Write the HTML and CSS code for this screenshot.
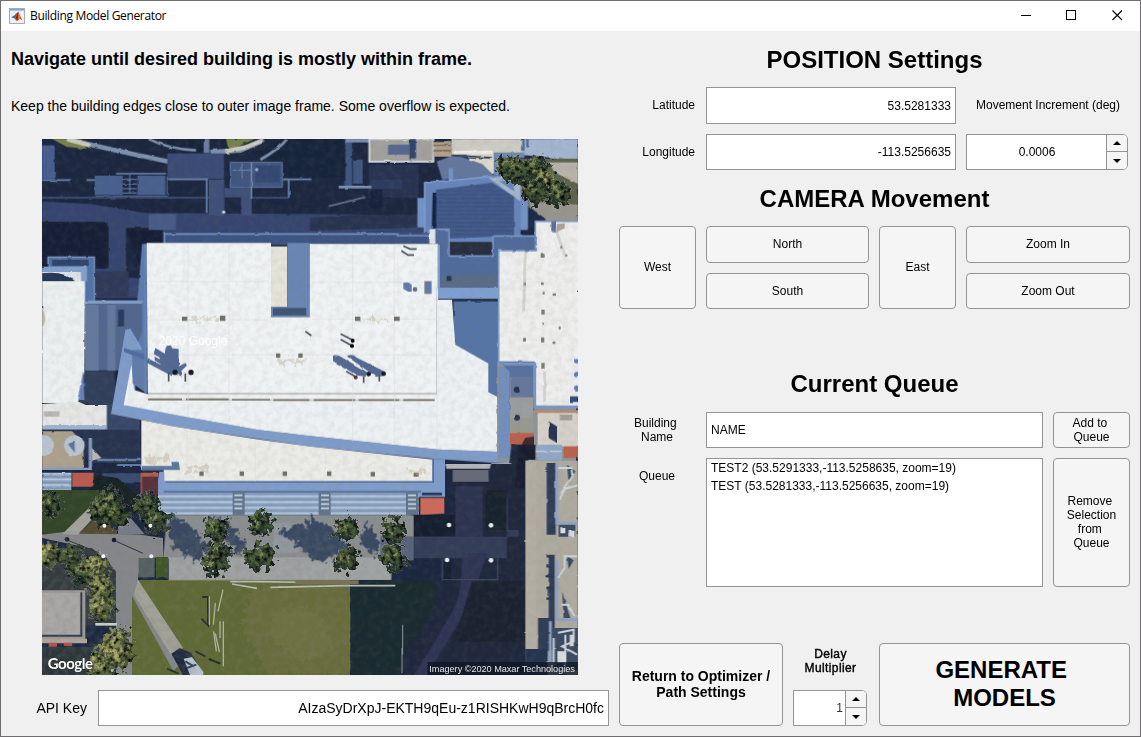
FILE: index.html
```html
<!DOCTYPE html>
<html lang="en">
<head>
<meta charset="utf-8">
<title>Building Model Generator</title>
<link rel="stylesheet" href="styles.css">
</head>
<body>
<div class="window">
  <header class="titlebar">
    <svg class="app-icon" viewBox="0 0 16 16">
      <rect x=".5" y=".5" width="15" height="15" fill="#eef0f3" stroke="#a3adb6"/>
      <rect x="1" y="1" width="14" height="1.6" fill="#7ea9cf"/>
      <path d="M2 9.200l3.200-1.700L8.200 4.500l.8 1.200-2.200 4.800-1.500-.3z" fill="#34709f"/>
      <path d="M5.200 10.400L9.200 3.600l1.700 3.600 2.600 5.300-2.700-1.700-2.800 2.500z" fill="#d9541e"/>
      <path d="M6.800 10l2.300-6.200.6 4.200-1.500 4.400z" fill="#7a2619"/>
      <path d="M9.300 5l1.600 4-1.300 2.600z" fill="#f3a133"/>
    </svg>
    <span class="title">Building Model Generator</span>
    <svg class="controls" viewBox="0 0 120 30" shape-rendering="crispEdges">
      <path d="M11 14.5h10M56.500 9.500h9v9h-9z" fill="none" stroke="#000"/>
      <path d="M102.500 9.500l9.500 9.500M112 9.500L102.500 19" stroke="#000" stroke-width="1.100" shape-rendering="auto"/>
    </svg>
  </header>
  <main class="content">
    <section class="left">
      <h2 class="instruction"><span>Navigate until desired building is mostly within frame.</span></h2>
      <p class="hint"><span>Keep the building edges close to outer image frame. Some overflow is expected.</span></p>
      <svg class="map" viewBox="0 3 1608 1608" color-interpolation-filters="sRGB">
        <defs>
          <filter id="rough" x="-20%" y="-20%" width="140%" height="140%"><feTurbulence type="fractalNoise" baseFrequency=".06" numOctaves="3" seed="4" result="n"/><feDisplacementMap in="SourceGraphic" in2="n" scale="50" xChannelSelector="R" yChannelSelector="G"/></filter>
          <filter id="leaves" x="-30%" y="-30%" width="160%" height="160%"><feTurbulence type="fractalNoise" baseFrequency=".055" numOctaves="3" seed="7" result="n"/><feDisplacementMap in="SourceGraphic" in2="n" scale="60" xChannelSelector="R" yChannelSelector="G" result="d"/><feTurbulence type="fractalNoise" baseFrequency=".07" numOctaves="3" seed="12"/><feColorMatrix values="2.400 0 0 0 -.4  2.400 0 0 0 -.4  2.400 0 0 0 -.35  0 0 0 0 1" result="m"/><feBlend in="d" in2="m" mode="multiply"/><feComposite in2="d" operator="in"/></filter>
          <filter id="edge" x="-5%" y="-5%" width="110%" height="110%"><feTurbulence type="fractalNoise" baseFrequency=".04" numOctaves="2" seed="9" result="n"/><feDisplacementMap in="SourceGraphic" in2="n" scale="7" xChannelSelector="R" yChannelSelector="G"/></filter>
          <filter id="grain" x="0" y="0" width="100%" height="100%"><feTurbulence type="fractalNoise" baseFrequency=".05" numOctaves="4" seed="2"/><feColorMatrix values="0 0 0 0 .5  0 0 0 0 .5  0 0 0 0 .45  2.400 0 0 0 -.9"/></filter>
          <pattern id="slats" width="20" height="17" patternUnits="userSpaceOnUse"><path d="M0 0h20v17H0z" fill="#8ea5c3"/><path d="M0 4h20" stroke="#bccfe2" stroke-width="5"/><path d="M0 14h20" stroke="#687f9f" stroke-width="2"/></pattern>
          <pattern id="deck" width="20" height="12" patternUnits="userSpaceOnUse"><path d="M0 0h20v12H0z" fill="#42598b"/><path d="M0 2h20" stroke="#3a4f7f" stroke-width="3"/></pattern>
          <g id="tree"><circle r="38" fill="#2b3b2c"/><circle cx="-10" cy="-9" r="27" fill="#4d6039"/><circle cx="12" cy="7" r="18" fill="#425536"/><circle cx="-9" cy="-11" r="11" fill="#7d8a56"/></g>
          <g id="olive"><circle r="40" fill="#55633a"/><circle cx="-9" cy="-8" r="31" fill="#828b50"/><circle cx="15" cy="13" r="17" fill="#4f5c35"/><circle cx="-9" cy="-12" r="13" fill="#a8ab68"/></g>
        </defs>
        <rect width="1608" height="1620" fill="#1c2740"/>
        <g filter="url(#edge)">
        <!-- north grounds -->
        <path d="M0 190L145 198 310 225 804 228 1150 232v58H330l-78-18v148h62v60H160v-90h40V265L0 250z" fill="#36456f"/>
        <path d="M0 40h120l240 35-60 45H150v70H0z" fill="#1c2740"/>
        <path d="M320 0h170v42l-90-6zM640 45l80-42h190v115H720V75z" fill="#17253b"/>
        <path d="M30 3h75l30 30-60-6zM552 3h88l-80 34z" fill="#77824b"/>
        <path d="M75 3q110 28 315 70M505 42l90-5 70-30" fill="none" stroke="#7d90ad" stroke-width="14"/><path d="M75 3q30 8 70 20M550 40l60-12 50-20" fill="none" stroke="#c9ccbb" stroke-width="13"/>
        <path d="M320 3q60 30 142 34M655 65q60-35 80-62" fill="none" stroke="#7d90ad" stroke-width="8"/>
        <path d="M485 3h17v42h-17z" fill="#6a7ea6"/>
        <path d="M376 46h170v76H376z" fill="#3a4b76"/>
        <path d="M0 22h38v100H0z" fill="#465d90"/>
        <path d="M158 113h84v58h-84zM286 113h84v58h-84z" fill="#48608f"/>
        <path d="M222 107h150M0 126h86M134 126h24M378 124h120M720 124h88M740 125v54M494 125v100" stroke="#6d86b3" stroke-width="5"/>
        <path d="M158 174h220M0 179h500M630 179h110M375 115v55" stroke="#576f9e" stroke-width="3"/>
        <path d="M242 124h42M242 138h42M242 152h42M242 165h42M263 110v56" stroke="#6d86b3" stroke-width="3"/>
        <path d="M500 124h47v110h-47zM548 150h82v28h-82zM597 178h32v55h-32z" fill="#3f5079"/>
        <path d="M565 73h156v75H565z" fill="#40567f" stroke="#5f79a9" stroke-width="3"/>
        <path d="M640 83h74v50h-74z" fill="#334872"/><path d="M628 73v110" stroke="#7c92bb" stroke-width="4"/><path d="M572 97h55M600 76v45" stroke="#7087b1" stroke-width="3"/><circle cx="644" cy="95" r="5" fill="#a3b5d2"/><circle cx="545" cy="222" r="5" fill="#cdd6e3"/>
        <path d="M0 252h196v140H160v80h-10V392H0zM252 270h110v160h-50z" fill="#161f36"/>
        <path d="M200 400h60v76H160v-76z" fill="#2f3a58"/>
        <path d="M320 228h82v48h-82z" fill="#475b87"/>
        <!-- northeast grounds -->
        <path d="M804 240q200-15 340-10v38l-340 10z" fill="#28334f"/><path d="M860 205l110-28" stroke="#62718f" stroke-width="5"/>
        <path d="M980 80h150v100H980z" fill="#273350"/><path d="M985 125h95v28h-95z" fill="#2d3b60"/><path d="M985 155h36v58h-36z" fill="#18223a"/>
        <path d="M910 3h20v140h-20zM933 65h29v72h-29z" fill="#40557f"/>
        <path d="M910 3h104v10H910zM890 143h98v8h-98z" fill="#7c92b5"/>
        <path d="M982 3h192v68H982z" fill="#a3a19d" stroke="#ced6dd" stroke-width="6"/>
        <path d="M1038 20h64v30h-64z" fill="#55688f"/><path d="M1102 3h20v58h-20z" fill="#32436b"/>
        <path d="M1174 12h54v44h-54z" fill="#b3a188"/><path d="M1174 22h54M1174 38h54" stroke="#716a61" stroke-width="4"/>
        <path d="M1228 3h220v48h-220z" fill="#cdccc4"/><path d="M1270 45h105v62h-65z" fill="#ded9cd"/>
        <path d="M1184 70l56-20 80 28 40 38-160 8z" fill="#63779e"/><path d="M1235 38h118v10h-118z" fill="#f1efe7"/><path d="M1230 52l120 8" stroke="#344461" stroke-width="6"/>
        <path d="M1444 3h164v63l-170-15z" fill="#a4b5cf"/><path d="M1456 3v25M1444 3v35" stroke="#536990" stroke-width="7"/>
        <path d="M1355 43h92v17h-78v52h-14z" fill="#7189ae"/>
        <path d="M1370 62h238v186h-130l-60-90-48-48z" fill="#5e634e"/><path d="M1392 62h35v12h-35z" fill="#d86a52"/>
        <path d="M1520 73h88v65l-70-35z" fill="#b7b4aa"/><path d="M1460 190l148 10v50h-130z" fill="#98958f"/>
        <path d="M1440 190l70 52v30h-90z" fill="#1c2a48"/>
        <!-- tower roof -->
        <path d="M1126 180h26v88h-26zM1430 168h28v108h-28zM1220 90h13v42h-13z" fill="#7392c6"/>
        <path d="M1146 132l280-26 13 6-4 205h-200l-89-25z" fill="#6785bb"/><path d="M1148 290V134l200-18" fill="none" stroke="#84a2d6" stroke-width="4"/>
        <path d="M1340 120l95-10v80zM1372 130l45 30-7-37z" fill="#a5b5cc"/>
        <path d="M1182 155l168-21 66 42v118l-190 7-44-15z" fill="url(#deck)"/><path d="M1172 164h11v122h-14z" fill="#15223f"/>
        <path d="M1222 312h128v40h-128z" fill="#282e3e"/>
        <!-- ledges and shaded courts -->
        <path d="M364 285h800v35H364z" fill="#3c5482"/><path d="M367 318v-30h700v5h95" fill="none" stroke="#7290bf" stroke-width="5"/>
        <path d="M300 318h18v448l-70-55-4-90 40-110z" fill="#5c7caf"/>
        <path d="M1164 274h57v80h132v-60h126v48h-106v110h-184z" fill="#506b9b"/><path d="M1164 274h57v80h132v-60h126" fill="none" stroke="#7997c8" stroke-width="5"/>
        <path d="M1162 274h18v44h-18z" fill="#dfe6ec"/><path d="M1196 410h168v40h-168z" fill="#596b88"/><path d="M1214 414h14v15h-14z" fill="#28344d"/>
        <path d="M1186 449h186v34h-186z" fill="#7e9fd2"/><path d="M1234 487h136v292l-32-18-5-85-97-55z" fill="#5675a6"/><path d="M1190 487h178" stroke="#222d43" stroke-width="7"/>
        <path d="M18 358h140v132H18z" fill="#5273a8"/><path d="M0 386h135v45H0z" fill="#83a1cd"/><path d="M30 365h110v18H30z" fill="#304468"/><path d="M18 386v-29h139v130" fill="none" stroke="#7f9dcb" stroke-width="4"/>
        <path d="M128 487h172v100l-60 110H128z" fill="#51678e"/><path d="M128 487h172v10H128z" fill="#829dc8"/>
        <path d="M130 500h40v200h-40zM196 500h24v200h-24z" fill="#8196b6" opacity=".4"/><path d="M228 515h18v50h-18z" fill="#273a5a"/>
        <path d="M125 700h90l15 120h-30l-90-30z" fill="#323f5b"/>
        <!-- west wing -->
        <path d="M0 402h117v30H0z" fill="#dbe2e8"/><path d="M0 406q70-8 100 25H0z" fill="#263756"/>
        <path d="M0 430h129l-2 270-22 95H0z" fill="#edf0f1"/><path d="M124 700l-18 86h21z" fill="#6785b6"/>
        <path d="M0 798l110-7 22 10h63v60H0z" fill="#e5e6e5"/><path d="M5 820h48v16H5z" fill="#9b9b95" opacity=".6"/><path d="M0 510q20 30 0 60z" fill="#c1baa9"/>
        <path d="M0 861h200v14H0z" fill="#9eb3d1"/><path d="M195 800l18-5 80 50v80h-98z" fill="#374769"/>
        <path d="M0 875h296v100H140l-20-80H0z" fill="#28344f"/><path d="M0 880l90 0 35 34v78H0z" fill="#aca18e"/>
        <path d="M140 900h10l0 96H0v-7h140z" fill="#859dc1"/><circle cx="5" cy="923" r="31" fill="#bac4cf"/><circle cx="97" cy="923" r="31" fill="#bac4cf"/><path d="M78 918l20-8v34z" fill="#5e729b"/>
        <path d="M165 962h132v8H165zM225 978h75v6h-75z" fill="#607ba7"/><path d="M180 1006h120v30h-120z" fill="#394c70"/><path d="M150 930l28 30-28 8z" fill="#b7b9b7"/>
        <path d="M0 1004h88v60H0z" fill="url(#slats)"/><path d="M90 1004h65v42H90zM296 1004h54v64h-54z" fill="#b75c50"/><path d="M300 1016h50v54h-50z" fill="#57333c"/>
        <path d="M156 1010l70 10 70 60v50H60l96-90z" fill="#182326"/>
        </g>
        <!-- main roofs -->
        <path d="M250 576l15-5 35 60-20 90 0 85L403 831 650 876 804 894 1184 934 1366 941V776l37 14v188L1172 962 804 925 400 866 207 828z" fill="#7f9cca"/>
        <path d="M268 680l8 76 39 12h870V485h45l10 135 99 56v86l27 14v165l-182-7-380-40-154-18-250-45-155-30z" fill="#edf1f3"/>
        <path d="M270 636h44v130l-42-30z" fill="#607caa"/><path d="M246 630l92 30v17l-92-35z" fill="#506da2"/>
        <path d="M314 315h373v222h117V318h384v450H318z" fill="#f0f3f4"/>
        <path d="M687 325h49v182h-49z" fill="#e6e3da"/><path d="M736 315h67v222H687v-31h49z" fill="#6986b4"/><path d="M693 510h100v22H693z" fill="#405477"/><path d="M803 318h7v220h-7z" fill="#f0f3f4"/>
        <path d="M318 766h867M318 786h860" stroke="#c0beb5" stroke-width="3"/><path d="M318 784h102M432 784h130M570 785h114M694 786h108M815 786h125M950 786h122M1084 786h94" stroke="#756c62" stroke-width="5"/>
        <path d="M1190 320v130" stroke="#87a1cb" stroke-width="7"/><path d="M1184 450v315" stroke="#c5cacb" stroke-width="3"/><path d="M310 318v448" stroke="#6984b1" stroke-width="5"/>
        <path d="M298 846l102 20 250 38 154 21 368 39v70H365v-38h-67z" fill="#ebebe7"/>
        <path d="M300 984h90l-2-12h22l4 24H300z" fill="#5c779f"/>
        <path d="M352 1001h15v28h804v-66h38v114H348v-50z" fill="#7f9cca"/><path d="M370 1032h804v-68M365 1061h772" fill="none" stroke="#536991" stroke-width="4"/>
        <path d="M348 1066h782v66H348z" fill="url(#slats)"/>
        <path d="M572 1063h36v68h-36zM830 1063h36v68h-36zM1092 1063h36v68h-36z" fill="#61748d"/><path d="M577 1072h24m-24 13h24m-24 13h24m-24 13h24M837 1072h24m-24 13h24m-24 13h24m-24 13h24M1098 1072h24m-24 13h24m-24 13h24m-24 13h24" stroke="#ccdae6" stroke-width="5"/>
        <path d="M1135 1080h72v46l-72 6z" fill="#ce6a5b"/><path d="M1140 1068h60" stroke="#26375d" stroke-width="8"/>
        <g stroke="#dfe3e3" stroke-width="2" fill="none"><path d="M438 320v520M561 320v530M932 320v590M1057 320v600M1185 770v160M320 430h360M320 545h360M810 433h375M810 543h375M320 650h860M435 870v160M640 905v125M850 935v95"/></g>
        <g fill="#716f68"><path d="M420 536h16v13h-16zM534 533h16v16h-16zM939 536h16v13h-16zM1056 536h17v13h-17zM702 646h13v13h-13zM769 646h13v13h-13zM472 1000h13v14h-13zM593 1000h13v14h-13zM722 1000h13v14h-13zM855 1000h13v14h-13zM986 1002h13v13h-13zM1115 1004h15v12h-15z"/></g>
        <g opacity=".4" filter="url(#rough)" fill="#b8ab91"><path d="M438 539h94v8h-94zM960 541h94v7h-94zM705 663h80v12h-80zM305 955h80v15h-80zM430 983h70v17h-70zM1100 995h55v9h-55z"/></g>
        <g fill="#536994" filter="url(#edge)"><path d="M370 633l5-10 12-1 4 9 19 2v52l20-10 5 7-20 20-40-6-22-20v-20h15z"/><path d="M340 630l75 45-8 15-72-42zM315 660l82 40-8 14-75-40zM338 655l80 45v15l-80-48z"/><path d="M870 655q10-9 25 0l80 47-3 14-27-4-75-45zM915 655q10-8 22 0l90 45 2 13-26 4z"/></g>
        <path d="M380 703v27M430 706v25M965 715v20M1012 712v18M896 588l35 18M896 604l35 20M913 700l32 18M790 580l18 13M1084 324l20 9h20M1078 338l20 13h18" stroke="#49525e" stroke-width="5" fill="none"/>
        <circle cx="399" cy="703" r="8" fill="#111a26"/><circle cx="447" cy="703" r="8" fill="#111a26"/><circle cx="980" cy="708" r="7" fill="#111a26"/><circle cx="1025" cy="707" r="7" fill="#111a26"/><circle cx="932" cy="608" r="6"/><circle cx="930" cy="624" r="6"/><circle cx="941" cy="718" r="6" fill="#4c3535"/>
        <path d="M1084 435q15-6 25 5v21h-10l-15-8z" fill="#5f7cae"/><path d="M1148 430h20v37h-20z" fill="#5e7baa" stroke="#8c9698" stroke-width="2"/><circle cx="1119" cy="454" r="7" fill="#68717d"/>
        <!-- east wing -->
        <g filter="url(#edge)">
        <path d="M1366 672h236v300h-236z" fill="#8e9498"/><path d="M1370 690h36v270h-36z" fill="#738fbd"/>
        <path d="M1368 670l110-2v150l-75-5V700z" fill="#5872a0"/><path d="M1404 718h69v175h-69z" fill="#9b9e9f"/><path d="M1405 718h68v60h-68z" fill="#65789b"/>
        <path d="M1368 338h112v-90h128v560h-130V670h-110z" fill="#edeeed"/><path d="M1370 680V338h110v-88h128" fill="none" stroke="#829ec9" stroke-width="5"/>
        <path d="M1370 678h108v129h130" fill="none" stroke="#7896c6" stroke-width="9"/><path d="M1474 816h134v8h-134z" fill="#b58a72"/>
        <path d="M1528 250h14v30h-14z" fill="#596f96"/><path d="M1544 258l24-2v15l-24 10z" fill="#aaa39c"/><path d="M1584 775h24v17h-24z" fill="#344d7e"/>
        <g fill="#7b7b78"><path d="M1496 345h12v14h-12zM1498 515h10v14h-10zM1445 433h7v9h-7zM1443 600h9v10h-9zM1497 598h10v15h-10zM1498 675h10v17h-10zM1532 466h7v7h-7zM1570 349h6v6h-6zM1555 325h6v9h-6zM1497 433h8v8h-8zM1532 610h8v8h-8zM1502 462h6v7h-6zM1500 555h6v6h-6zM1550 565h6v9h-6z"/></g>
        <path d="M1450 340l-5 180M1508 700v90M1540 270l30 85" stroke="#a8a49b" stroke-width="9" opacity=".35"/>
        <circle cx="1604" cy="668" r="8" fill="#5b7dbc"/><circle cx="1604" cy="710" r="8" fill="#5b7dbc"/><circle cx="1604" cy="750" r="8" fill="#5b7dbc"/>
        <path d="M1487 825h121v100h-121z" fill="#d6d1c8"/><path d="M1520 850l25 15v50l-25-15z" fill="#273553"/><path d="M1553 830h38v17h-38z" fill="#a39c98"/>
        <path d="M1485 920h75v47h-75z" fill="#91a8c8"/><path d="M1480 940h75" stroke="#c9d4df" stroke-width="4"/><path d="M1404 840h70v42h-70z" fill="#989990"/><path d="M1565 925h43v35h-43zM1404 885h72v36h-72z" fill="#b9614d"/><path d="M1450 900l26-5v30h-40z" fill="#402a31"/>
        <g fill="#25334d"><circle cx="1424" cy="755" r="9"/><circle cx="1425" cy="839" r="9"/></g>
        </g>
        <!-- shaded southeast yard -->
        <path d="M1210 978h192l6-60 60 5v693H925V1326h310v-245z" fill="#20283d"/>
        <path d="M1240 1045h82v200h-82z" fill="#2d3450"/><path d="M1430 920h50v45h-32v86h-30z" fill="#191d30"/>
        <path d="M1060 1196h370v-20h-35v85H1090v-65z" fill="#323d58"/><path d="M1210 978h198v-2h-60l-5 16h-130z" fill="#b3b7b9"/><path d="M1232 996h108v35h-108z" fill="#666a7a"/>
        <path d="M1228 1245h108l-26 80q-38 95-80 162l-75 124h-40q80-125 123-205 25-55 20-161z" fill="#2f3654"/>
        <path d="M1107 1130h132v64h-132zM1205 1262h22v66h-22z" fill="#151f30"/>
        <path d="M1201 1262v63h166v-63M1395 1080v100" fill="none" stroke="#3d495e" stroke-width="4"/>
        <path d="M1330 1056h64v120h-64z" fill="#17232d"/><path d="M1290 1330h157v181h-210z" fill="#1b2331"/>
        <circle cx="1221" cy="1161" r="7" fill="#eef1f5"/><circle cx="1347" cy="1162" r="7" fill="#eef1f5"/><circle cx="1215" cy="1266" r="7" fill="#eef1f5"/><circle cx="1347" cy="1267" r="7" fill="#eef1f5"/>
        <!-- southeast building -->
        <g filter="url(#edge)"><path d="M1452 968h156v643h-156z" fill="#aeaaa0"/><path d="M1450 968h33v565h-33z" fill="#b3aea3"/>
        <path d="M1514 975h27v215h-27zM1488 1440h50v95h-50zM1520 1250h18v205h-18z" fill="#2f3d57"/>
        <path d="M1544 975v180h64M1545 1265v180h63M1525 1450v140" fill="none" stroke="#8ea4c5" stroke-width="9"/>
        <path d="M1550 1160h50v36h-50zM1560 1360l25 80h-20zM1530 1470h78v125h-78zM1575 980l25 20-20 35zM1575 1255l20 12-15 25z" fill="#3c4a62"/><path d="M1548 990h40l4 25-38 50M1554 1082l15-30 39-10M1548 1320l20-30v-35h38M1558 1400h20l20 35M1545 1485l50-10v35l-35 15 45 25M1535 1500v80M1570 1490v100" fill="none" stroke="#cdd5da" stroke-width="6"/>
        <path d="M1555 1168h15v18h-15M1580 1178h18v20h-18M1546 1540h24v35h-24M1583 1490h12v35h-12" fill="#d8dddf"/><path d="M1513 1255h20M1513 1285h20M1513 1315h20M1513 1350h20M1513 1382h20" stroke="#293957" stroke-width="7"/><path d="M1452 1533h65v78h-65z" fill="#263450"/></g>
        <!-- terrace and lawn -->
        <path d="M375 1132h740v135h-70v59H380v-64h-17z" fill="#8b8e90"/><path d="M380 1258h668v68H380z" fill="#a0a3a4"/><path d="M695 1155h75v90h-75z" fill="#9298a0"/><path d="M1015 1195h100v72h-100z" fill="#58647a"/>
        <g fill="#3a4962" filter="url(#rough)"><path d="M390 1130l70 45 35 55-35 40-65-40-20-55zM500 1130l55 20 60 70-20 35-60-60zM705 1180l80-20 45 60 30-30 30 60-65 25-60-55zM850 1150l70 70 25 45-80-20zM965 1150l45 60 0 45-55-40zM800 1140l65 30 55 60-60 20-70-50zM420 1180l80 40 10 30-90-10z"/></g>
        <path d="M270 1326l655 0v285H265v-225z" fill="#5e6935"/><path d="M630 1345h295v266H680l-80-140z" fill="#696d3d" filter="url(#rough)"/>
        <path d="M925 1326h250q32 70-70 191l-40 94H925z" fill="#1a2b31"/><path d="M690 1440q70-60 150 0l40 90-100 45-90-70z" fill="#77784a" opacity=".4" filter="url(#rough)"/>
        <path d="M565 1331l75 0 285 4M570 1338l75 13M685 1348l225-5h150" stroke="#b9bdb9" stroke-width="5" fill="none"/><path d="M760 1327h190v12H760z" fill="#777157"/>
        <!-- paths -->
        <path d="M0 1056h170l40 120-90 15H0z" fill="#34462a"/><path d="M0 1190l65-8 230 8 68 10v57l-67 5-8 63 30 80 110 160-34 34-124-225v237h-48V1310l-28-50-80-35-114-25z" fill="#85878b"/>
        <path d="M60 1189l80-78 20 22-53 57z" fill="#a3a39d"/><path d="M228 1191v-40l35-15 45 53z" fill="#777c88"/><path d="M110 1187l45-40 70 30v12z" fill="#554c36"/>
        <path d="M288 1325l135 205-36 20-112-180z" fill="#a3a29a"/>
        <path d="M342 1257h36v65l-18-6-18 5z" fill="#3f5627"/><path d="M290 1260h48v58h-48z" fill="#536060"/>
        <path d="M0 1230h150l72 70v160H0z" fill="#353c40"/><path d="M0 1357h130v155H0z" fill="#9c9b9a"/><path d="M0 1365h113v130H0z" fill="#aaa8a6"/><path d="M118 1363v130H0" fill="none" stroke="#353d4c" stroke-width="6"/><path d="M0 1502h135v14H0z" fill="#b1a59d"/><path d="M20 1514h25v12H20zM65 1514h25v10H65z" fill="#b5524a"/>
        <path d="M0 1527h150l70-60 2 144H0z" fill="#2c373b"/><path d="M160 1455h65v8h-65z" fill="#ccd0cc"/><path d="M195 1600l20-10v21h-20z" fill="#aeb0ae"/>
        <g filter="url(#leaves)"><use href="#tree" x="205" y="1090"/><use href="#tree" x="180" y="1125"/><use href="#tree" x="225" y="1130"/><use href="#tree" x="315" y="1105"/><use href="#tree" x="345" y="1150"/><use href="#tree" x="20" y="1095"/>
        <use href="#tree" x="523" y="1175"/><use href="#tree" x="530" y="1250"/><use href="#tree" x="520" y="1278"/><use href="#tree" x="660" y="1155"/><use href="#tree" x="645" y="1260"/><use href="#tree" x="665" y="1255"/><use href="#tree" x="915" y="1175"/><use href="#tree" x="915" y="1265"/><use href="#tree" x="1055" y="1180"/><use href="#tree" x="1055" y="1260"/>
        <use href="#tree" x="90" y="1260"/><use href="#tree" x="120" y="1300"/><use href="#olive" x="15" y="1250"/><use href="#olive" x="165" y="1290"/><use href="#olive" x="180" y="1350"/><use href="#olive" x="180" y="1410"/><use href="#olive" x="230" y="1510"/><use href="#olive" x="195" y="1550"/><use href="#olive" x="235" y="1555"/><use href="#olive" x="175" y="1590"/>
        <use href="#tree" x="1400" y="90"/><use href="#tree" x="1435" y="100"/><use href="#tree" x="1480" y="90"/><use href="#olive" x="1510" y="135"/><use href="#tree" x="1480" y="160"/><use href="#tree" x="1550" y="170"/></g>
        <path d="M218 1208l85 38M75 1206l95 38" stroke="#29303e" stroke-width="3"/><circle cx="216" cy="1206" r="7" fill="#111827"/><circle cx="75" cy="1204" r="7" fill="#111827"/>
        <g fill="#fff"><circle cx="187" cy="1163" r="6"/><circle cx="325" cy="1163" r="6"/><circle cx="184" cy="1255" r="6"/><circle cx="328" cy="1255" r="6"/></g>
        <path d="M480 1377h18v85l-20-20M460 1540l30 15M500 1563l35 14M375 1592l35 15" fill="none" stroke="#233026" stroke-width="6"/><path d="M502 1375v85M520 1395l-6 65M543 1355l-15 65M515 1480l8 60M534 1450v50M544 1450v135M520 1487l12 55" stroke="#b1b49f" stroke-width="4"/><path d="M1082 1460v90M1080 1530v75" stroke="#8f989d" stroke-width="3"/>
        <path d="M388 1547l25-17 35 15 37 66h-62z" fill="#202b42"/><path d="M425 1562l25-5 34 44v10h-40z" fill="#b8c1cc"/><path d="M430 1570l25 15m-20 5l28-10" stroke="#34435a" stroke-width="6"/>
        <rect y="3" width="1608" height="1608" filter="url(#grain)" opacity=".09"/>
        <rect y="1180" width="925" height="431" filter="url(#grain)" opacity=".14"/>
        <text class="watermark" x="350" y="620">2020 Google</text>
        <text class="google" x="17" y="1594" textLength="136">Google</text>
        <path d="M1156 1572h452v39h-452z" fill="#101725" opacity=".78"/>
        <text class="credit" x="1162" y="1601">Imagery ©2020 Maxar Technologies</text>
      </svg>
      <div class="api">
        <label>API Key</label>
        <div class="field right-text"><span>AIzaSyDrXpJ-EKTH9qEu-z1RISHKwH9qBrcH0fc</span></div>
      </div>
    </section>
    <section class="panel">
      <h1 class="heading heading-position">POSITION Settings</h1>
      <div class="grid position">
        <label class="end">Latitude</label><div class="field right-text wide">53.5281333</div><label class="movement">Movement Increment (deg)</label>
        <label class="end">Longitude</label><div class="field right-text wide">-113.5256635</div>
        <div class="spinner"><div class="value centered">0.0006</div><div class="arrows"><i class="up"></i><i class="down"></i></div></div>
      </div>
      <h1 class="heading heading-camera">CAMERA Movement</h1>
      <div class="grid camera">
        <button class="tall">West</button><button>North</button><button class="tall">East</button><button>Zoom In</button><button class="lower">South</button><button class="lower">Zoom Out</button>
      </div>
      <h1 class="heading heading-queue">Current Queue</h1>
      <div class="queue-grid">
        <label class="center">Building&nbsp;<br>Name</label><div class="field">NAME</div><button class="add">Add to&nbsp;<br>Queue</button>
        <label class="queue-label">Queue</label>
        <div class="list"><div>TEST2 (53.5291333,-113.5258635, zoom=19)</div><div>TEST (53.5281333,-113.5256635, zoom=19)</div></div>
        <button>Remove&nbsp;<br>Selection<br>from&nbsp;<br>Queue</button>
      </div>
      <div class="actions">
        <button class="return">Return to Optimizer /<br>Path Settings</button>
        <div class="delay"><label>Delay<br>Multiplier</label><div class="spinner"><div class="value">1</div><div class="arrows"><i class="up"></i><i class="down"></i></div></div></div>
        <button class="generate">GENERATE&nbsp;<br>MODELS</button>
      </div>
    </section>
  </main>
</div>
</body>
</html>
```

FILE: styles.css
```css
* { box-sizing: border-box; }
body { margin: 0; overflow: hidden; font: 12px/14px "Liberation Sans", Arial, sans-serif; color: #000; }
h1, h2, p { margin: 0; }
.window { width: 1141px; height: 737px; border: 1px solid #6f6d6f; background: #f0f0f0; display: flex; flex-direction: column; }
.titlebar { height: 30px; flex: none; background: #fff; display: flex; align-items: center; padding-left: 8px; }
.app-icon { width: 16px; height: 16px; }
.title { margin-left: 5px; font: 12px/16px "Open Sans", "Noto Sans", sans-serif; letter-spacing: -.34px; }
.controls { width: 120px; height: 30px; margin-left: auto; margin-right: 10px; }
.content { flex: 1; display: grid; grid-template-columns: 608px 511px; gap: 10px; }
.left { padding-left: 10px; }
.instruction { height: 56px; font-size: 18px; line-height: 56px; white-space: nowrap; }
.hint { height: 52px; font-size: 14px; line-height: 38px; white-space: nowrap; }
.map { display: block; width: 536px; height: 536px; margin-left: 31px; }
.api { display: grid; grid-template-columns: 77px 511px; gap: 10px; height: 36px; margin-top: 15px; font-size: 14px; }
.api label { align-self: center; text-align: right; padding-right: 1px; }
label { display: block; }
.field { background: #fff; border: 1px solid #949494; display: flex; align-items: center; padding: 0 4px; white-space: nowrap; }
.right-text { justify-content: flex-end; }
.panel { display: flex; flex-direction: column; }
.heading { text-align: center; font-size: 24px; line-height: 28px; white-space: nowrap; }
.heading-position { height: 56px; padding-top: 15px; }
.heading-camera { height: 56px; padding-top: 15px; }
.heading-queue { height: 103px; padding-top: 61px; }
.grid { display: grid; grid-template-columns: 77px 163px 77px 164px; gap: 10px; align-items: stretch; }
.position { height: 83px; grid-template-rows: 37px 36px; }
.position label { align-self: center; white-space: nowrap; }
.position .end { text-align: right; padding-right: 1px; }
.position .end:first-child, .position .movement { padding-bottom: 1px; }
.wide { grid-column: span 2; }
.movement { text-align: center; }
.camera { height: 83px; grid-template-rows: 37px 36px; }
.tall { grid-row: span 2; }
button { font: inherit; color: inherit; background: #f5f5f5; border: 1px solid #949494; border-radius: 4px; padding: 0 0 2px; }
.add, .lower { padding-bottom: 0; }
.spinner { display: flex; width: 162px; height: 36px; border: 1px solid #949494; border-radius: 0 5px 5px 0; background: #fff; overflow: hidden; }
.value { flex: 1; display: flex; align-items: center; justify-content: flex-end; padding-right: 2px; }
.centered { justify-content: center; padding: 0 0 0 1px; }
.arrows { width: 21px; border-left: 1px solid #949494; display: grid; grid-template-rows: 16px 18px; background: #f5f5f5; }
.arrows i { display: grid; place-items: center; }
.arrows i + i { border-top: 1px solid #949494; }
.arrows i::before { content: ""; width: 0; height: 0; border: 4px solid transparent; border-top-width: 0; border-bottom: 4px solid #000; }
.arrows .down::before { border-bottom-width: 0; border-top: 4px solid #000; }
.queue-grid { display: grid; grid-template-columns: 77px 337px 77px; grid-template-rows: 36px 129px; gap: 10px; }
.center { text-align: center; align-self: center; padding-right: 1px; }
.queue-label { text-align: center; padding-top: 11px; padding-right: 1px; }
.list { background: #fff; border: 1px solid #949494; padding-left: 4px; line-height: 18px; white-space: nowrap; }
.actions { margin-top: 56px; height: 83px; display: grid; grid-template-columns: 164px 74px 251px; column-gap: 10px; }
.actions .generate { margin-left: 2px; width: 251px; }
.return { font-size: 14px; line-height: 16px; font-weight: bold; }
.generate { font-size: 24px; line-height: 28px; font-weight: bold; }
.delay { display: flex; flex-direction: column; gap: 15px; padding-top: 4px; text-align: center; }
.delay label { letter-spacing: .4px; -webkit-text-stroke: .4px #000; padding-left: 1px; }
.delay .spinner { width: 74px; }
.delay .value { color: #333; }
.watermark { font: 36px "Liberation Sans", sans-serif; fill: #fff; }
.google { font: bold 45px "Lato", sans-serif; fill: #fff; stroke: #27302f; stroke-width: 3px; paint-order: stroke; }
.credit { font: 27.5px "Liberation Sans", sans-serif; letter-spacing: -.1px; fill: #e4e5e8; }
```
